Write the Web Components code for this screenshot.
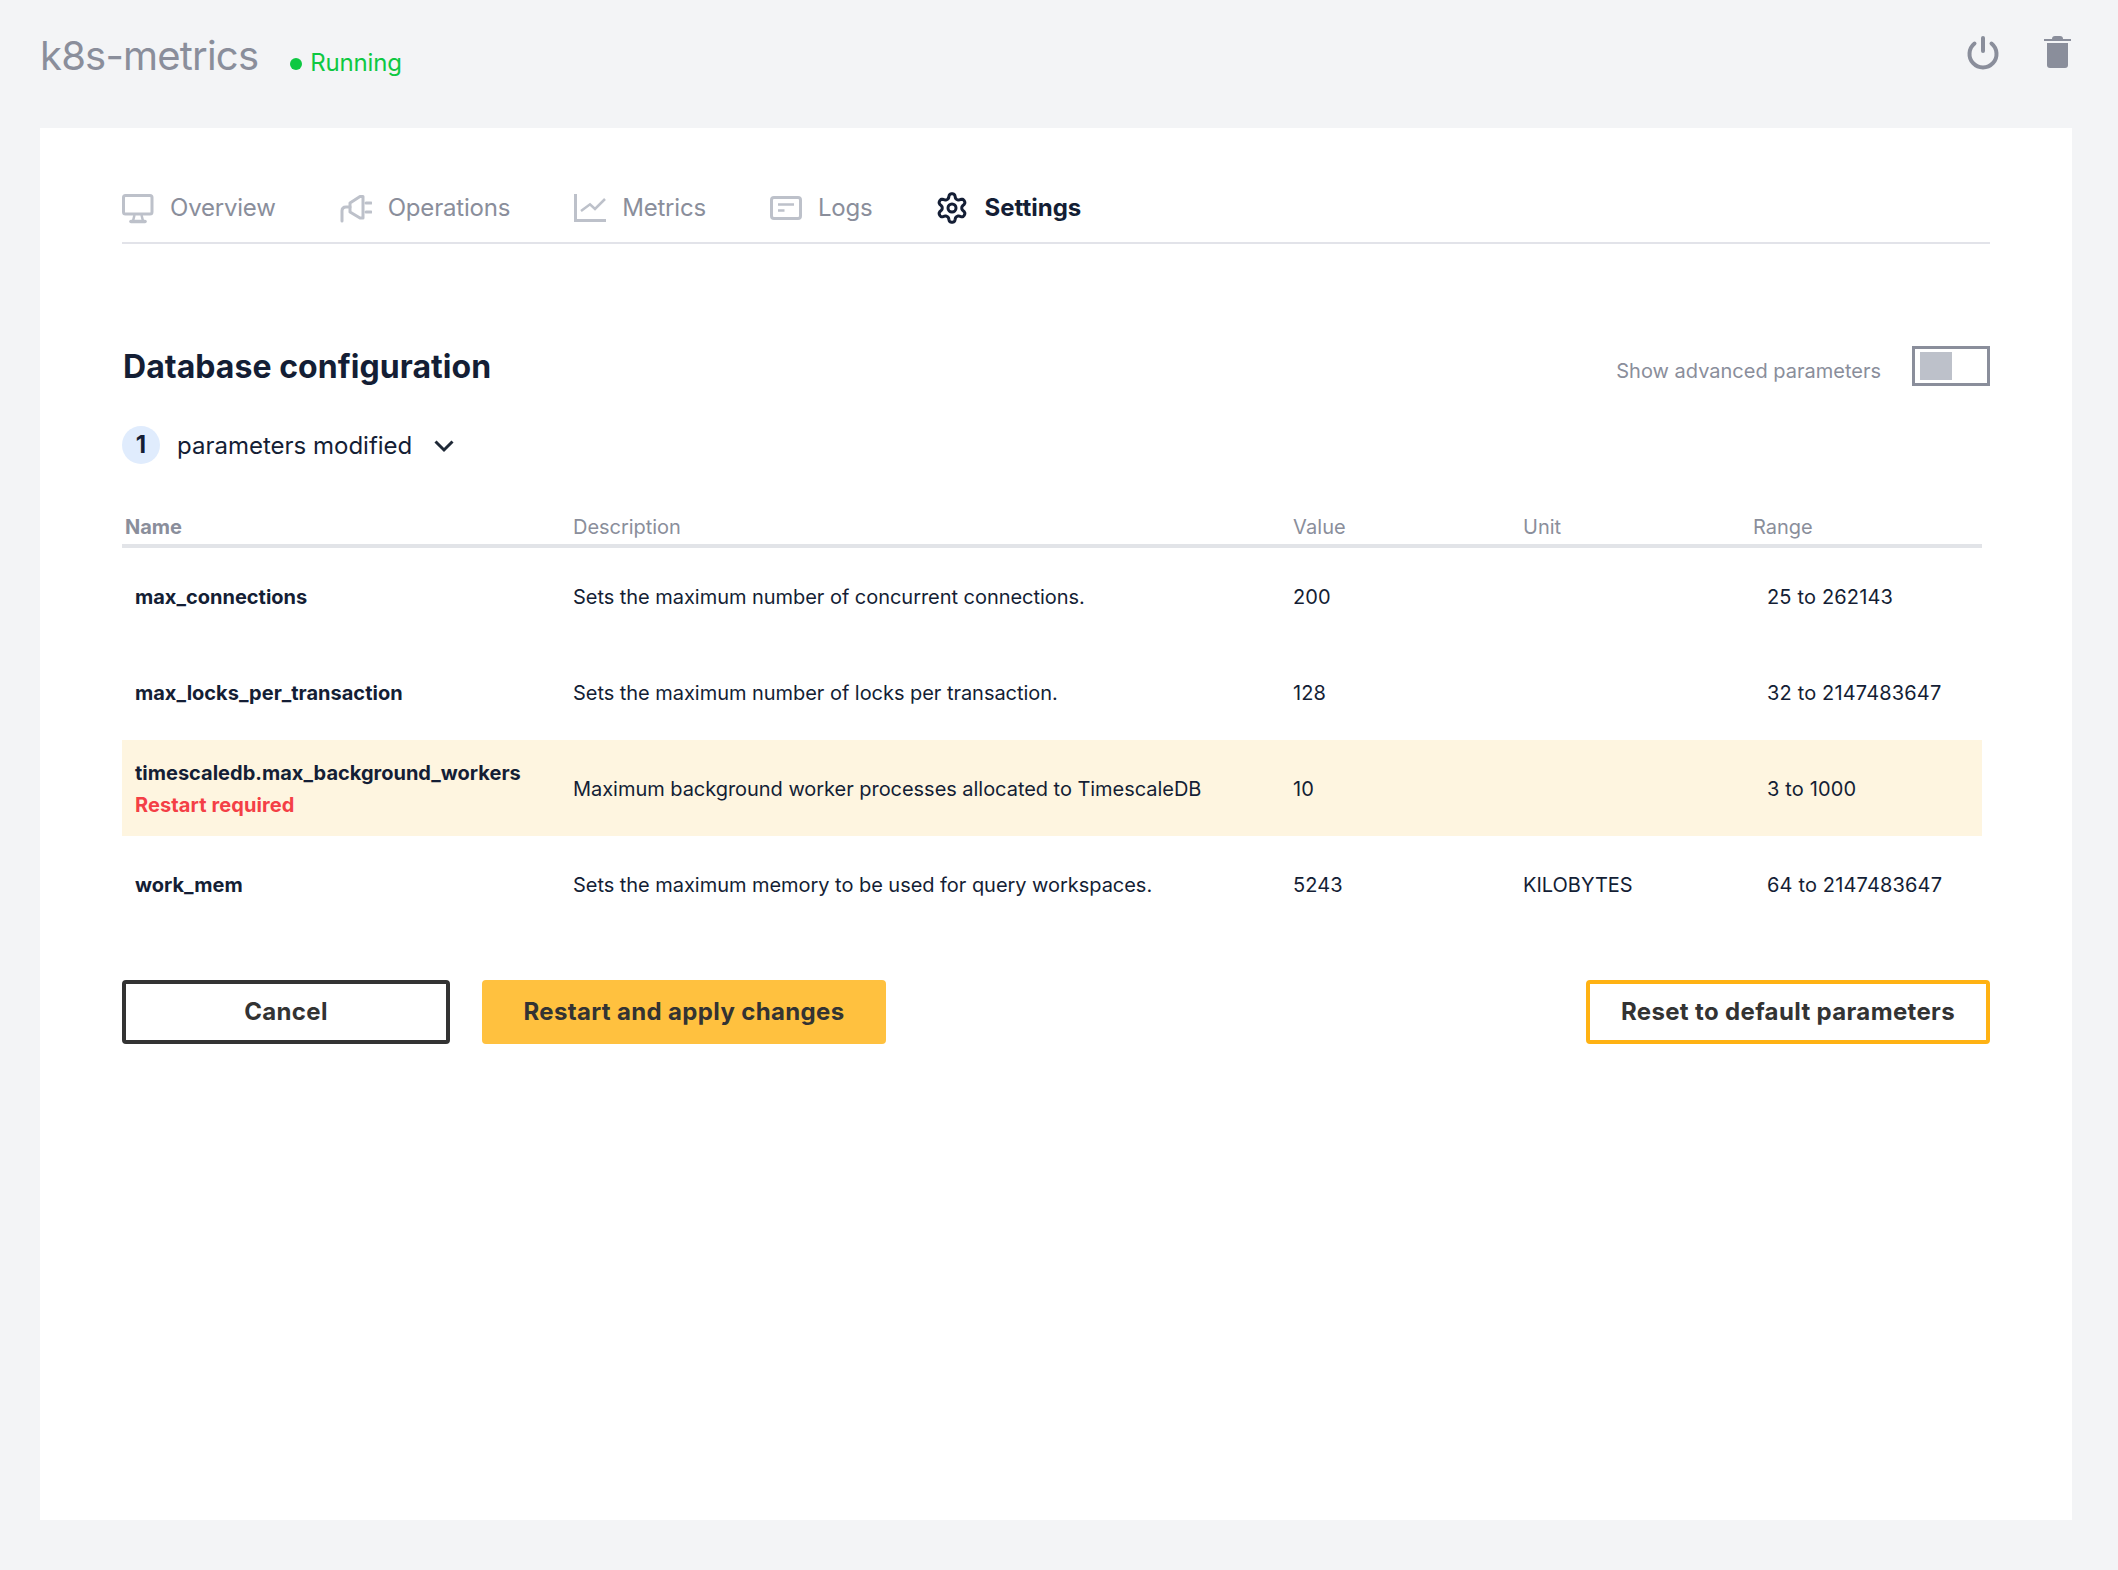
<!DOCTYPE html>
<html lang="en">
<head>
<meta charset="utf-8">
<title>k8s-metrics</title>
<style>
  html, body { margin: 0; padding: 0; }
  body { background: #f3f4f6; font-family: Inter, "Liberation Sans", sans-serif; color: #141e35; width: 2118px; height: 1570px; overflow: hidden; }
</style>
</head>
<body>
<app-shell>
  <app-header slot="header" title-text="k8s-metrics" status="Running"></app-header>
  <tab-nav>
    <tab-item icon="monitor" label="Overview"></tab-item>
    <tab-item icon="plug" label="Operations"></tab-item>
    <tab-item icon="chart" label="Metrics"></tab-item>
    <tab-item icon="logs" label="Logs"></tab-item>
    <tab-item icon="gear" label="Settings" active></tab-item>
  </tab-nav>
  <section-head heading="Database configuration" toggle-label="Show advanced parameters"></section-head>
  <modified-count count="1" label="parameters modified"></modified-count>
  <param-table>
    <param-row header name="Name" desc="Description" value="Value" unit="Unit" range="Range"></param-row>
    <param-row name="max_connections" desc="Sets the maximum number of concurrent connections." value="200" range="25 to 262143"></param-row>
    <param-row name="max_locks_per_transaction" desc="Sets the maximum number of locks per transaction." value="128" range="32 to 2147483647"></param-row>
    <param-row highlight name="timescaledb.max_background_workers" note="Restart required" desc="Maximum background worker processes allocated to TimescaleDB" value="10" range="3 to 1000"></param-row>
    <param-row name="work_mem" desc="Sets the maximum memory to be used for query workspaces." value="5243" unit="KILOBYTES" range="64 to 2147483647"></param-row>
  </param-table>
  <action-bar>
    <app-button variant="dark" style="width:328px">Cancel</app-button>
    <app-button variant="primary" style="width:404px">Restart and apply changes</app-button>
    <app-button variant="outline" slot="end" style="width:404px">Reset to default parameters</app-button>
  </action-bar>
</app-shell>

<script>
function gearPath(cx, cy, R, a) {
  let d = '';
  const n = 144;
  for (let i = 0; i < n; i++) {
    const t = i / n * Math.PI * 2;
    const c = Math.cos(6 * t);
    const r = R + a * Math.tanh(c * 1.6) / Math.tanh(1.6);
    const x = cx + r * Math.sin(t), y = cy - r * Math.cos(t);
    d += (i ? 'L' : 'M') + x.toFixed(2) + ' ' + y.toFixed(2);
  }
  return d + 'Z';
}
const ICONS = {
  monitor: `<svg width="32" height="32" viewBox="0 0 32 32" fill="none" stroke="currentColor" stroke-width="3"><rect x="1.5" y="3.5" width="28.5" height="18.5" rx="2"/><path d="M12.5 23 L11 29 M19.5 23 L21 29" stroke-width="2.5"/><path d="M9 29.5 H23" stroke-width="3.6" stroke-linecap="round"/></svg>`,
  plug: `<svg width="32" height="32" viewBox="0 0 32 32" fill="none" stroke="currentColor" stroke-width="3" stroke-linecap="round" stroke-linejoin="round"><path d="M2 29 V19 Q2 15 6 15 H10"/><path d="M10 11 L20 4.5 H23 V26 H20 L10 20 Z"/><path d="M26 11 H31 M26 20 H31"/></svg>`,
  chart: `<svg width="32" height="32" viewBox="0 0 32 32" fill="none" stroke="currentColor" stroke-width="3"><path d="M1.5 2 V28.5 H32"/><path d="M7 19 L16 12.3 L21 17 L31 7" stroke-width="2.5"/></svg>`,
  logs: `<svg width="32" height="32" viewBox="0 0 32 32" fill="none" stroke="currentColor" stroke-width="3"><rect x="1.5" y="5.5" width="29" height="21" rx="2.5"/><path d="M8 12.5 H24 M8 18.5 H14.5" stroke-width="2.5"/></svg>`,
  gear: `<svg width="32" height="32" viewBox="0 0 32 32" fill="none" stroke="currentColor" stroke-width="3" stroke-linejoin="round"><path d="${gearPath(16, 16, 12, 2.2)}"/><circle cx="16" cy="16" r="4"/></svg>`,
  power: `<svg width="32" height="40" viewBox="0 0 32 40" fill="none" stroke="#8a8e9b" stroke-width="4" stroke-linecap="round"><path d="M16 6 V19"/><path d="M7.5 11.5 A13.5 13.5 0 1 0 24.5 11.5"/></svg>`,
  trash: `<svg width="32" height="40" viewBox="0 0 32 40" fill="#8a8e9b"><path d="M2 7 H29 V9 H2 Z"/><path d="M10 7 Q10 4 13 4 H18 Q21 4 21 7 Z"/><path d="M5 11 H26 V33 Q26 36 23 36 H8 Q5 36 5 33 Z"/></svg>`
};

function define(name, css, html) {
  customElements.define(name, class extends HTMLElement {
    constructor() {
      super();
      this.attachShadow({ mode: 'open' });
    }
    connectedCallback() {
      if (this._done) return;
      this._done = true;
      const a = n => this.getAttribute(n) || '';
      this.shadowRoot.innerHTML = `<style>${css}</style>` + html(a, this);
    }
  });
}
const esc = s => s.replace(/&/g, '&amp;').replace(/</g, '&lt;');

define('app-shell', `
  :host { display: block; }
  main { box-sizing: border-box; background: #fff; margin: 0 46px 0 40px; height: 1392px; padding: 0 82px; display: block; }
`, () => `<slot name="header"></slot><main><slot></slot></main>`);

define('app-header', `
  :host { display: flex; box-sizing: border-box; height: 128px; padding: 32px 44px 0 40px; align-items: flex-start; justify-content: space-between; }
  .left { display: flex; align-items: baseline; }
  h1 { margin: 0; font: 400 40px/48px Inter, sans-serif; color: #8a8e9b; letter-spacing: -0.8px; }
  .status { display: inline-flex; align-items: center; gap: 8px; margin-left: 32px; font: 400 24px/30px Inter, sans-serif; color: #0ec842; letter-spacing: -0.15px; }
  .dot { width: 12px; height: 12px; border-radius: 50%; background: #0ec842; margin-top: 3px; }
  .actions { display: flex; gap: 43px; }
  svg { display: block; }
`, a => `<div class="left"><h1>${esc(a('title-text'))}</h1><span class="status"><span class="dot"></span>${esc(a('status'))}</span></div>
  <div class="actions">${ICONS.power}${ICONS.trash}</div>`);

define('tab-nav', `
  :host { display: flex; box-sizing: border-box; height: 116px; padding-top: 62px; gap: 64px; border-bottom: 2px solid #e2e3e9; align-items: flex-start; }
`, () => `<slot></slot>`);

define('tab-item', `
  :host { display: flex; align-items: center; gap: 16px; height: 36px; font: 400 24px/36px Inter, sans-serif; color: #8a8e9b; white-space: nowrap; letter-spacing: -0.2px; }
  :host([active]) { color: #141e35; font-weight: 700; letter-spacing: 0; }
  .i { color: #bdc1ca; display: block; width: 32px; height: 32px; }
  :host([active]) .i { color: #141e35; }
  svg { display: block; }
`, a => `<span class="i">${ICONS[a('icon')]}</span><span>${esc(a('label'))}</span>`);

define('section-head', `
  :host { display: flex; justify-content: space-between; align-items: center; height: 40px; margin-top: 102px; }
  h2 { margin: 2px 0 0; font: 700 32px/40px Inter, sans-serif; color: #141e35; padding-left: 1px; letter-spacing: 0.05px; }
  .r { display: flex; align-items: flex-end; gap: 31px; }
  .l { font: 400 20px/24px Inter, sans-serif; color: #8a8e9b; padding-bottom: 3px; }
  .t { box-sizing: border-box; width: 78px; height: 40px; border: 3px solid #8a8e9b; padding: 3px 5px; }
  .k { width: 32px; height: 28px; background: #bdc1ca; }
`, a => `<h2>${esc(a('heading'))}</h2><div class="r"><span class="l">${esc(a('toggle-label'))}</span><div class="t"><div class="k"></div></div></div>`);

define('modified-count', `
  :host { display: flex; align-items: center; height: 38px; margin-top: 40px; }
  .b { width: 38px; height: 38px; border-radius: 50%; background: #e0ecfd; font: 700 24px/38px Inter, sans-serif; text-align: center; color: #141e35; }
  .l { margin-left: 17px; margin-top: 2px; font: 400 24px/38px Inter, sans-serif; color: #141e35; }
  svg { display: block; margin-left: 22px; margin-top: 2px; }
`, a => `<span class="b">${esc(a('count'))}</span><span class="l">${esc(a('label'))}</span>
  <svg width="20" height="14" viewBox="0 0 20 14" fill="none" stroke="#1f2937" stroke-width="3"><path d="M1.5 2.5 L10 11 L18.5 2.5"/></svg>`);

define('param-table', `
  :host { display: block; width: 1860px; padding-top: 51px; }
`, () => `<slot></slot>`);

define('param-row', `
  :host { display: grid; box-sizing: border-box; grid-template-columns: 451px 720px 230px 231px 1fr; height: 96px; padding-top: 2px; align-items: center; font: 400 20px/28px Inter, sans-serif; color: #141e35; }
  :host([highlight]) { background: #fef5e0; }
  :host([header]) { height: 33px; padding-top: 0; align-items: start; border-bottom: 4px solid #e2e4e8; color: #8a8e9b; line-height: 24px; }
  .n { padding-left: 13px; font-weight: 700; line-height: 32px; }
  :host([header]) .n { padding-left: 3px; line-height: 24px; }
  .note { color: #f43f46; letter-spacing: 0.1px; }
  .d { letter-spacing: -0.04px; }
  .v { letter-spacing: 0.1px; }
  .rg { padding-left: 13px; letter-spacing: 0.16px; }
  :host([header]) .rg { padding-left: 0; margin-left: -1px; letter-spacing: 0; }
`, a => `<div class="n"><div>${esc(a('name'))}</div>${a('note') ? `<div class="note">${esc(a('note'))}</div>` : ''}</div>
  <div class="d">${esc(a('desc'))}</div><div class="v">${esc(a('value'))}</div><div>${esc(a('unit'))}</div><div class="rg">${esc(a('range'))}</div>`);

define('action-bar', `
  :host { display: flex; justify-content: space-between; margin-top: 48px; }
  .l { display: flex; gap: 32px; }
`, () => `<div class="l"><slot></slot></div><slot name="end"></slot>`);

define('app-button', `
  :host { display: flex; box-sizing: border-box; height: 64px; align-items: center; justify-content: center; border-radius: 4px; border: 4px solid transparent; font: 700 24px/32px Inter, sans-serif; color: #333; white-space: nowrap; letter-spacing: 0.35px; }
  :host([variant=dark]) { border-color: #333; }
  :host([variant=primary]) { background: #ffc13f; border-color: #ffc13f; }
  :host([variant=outline]) { border-color: #ffb213; }
`, () => `<slot></slot>`);
</script>
</body>
</html>
